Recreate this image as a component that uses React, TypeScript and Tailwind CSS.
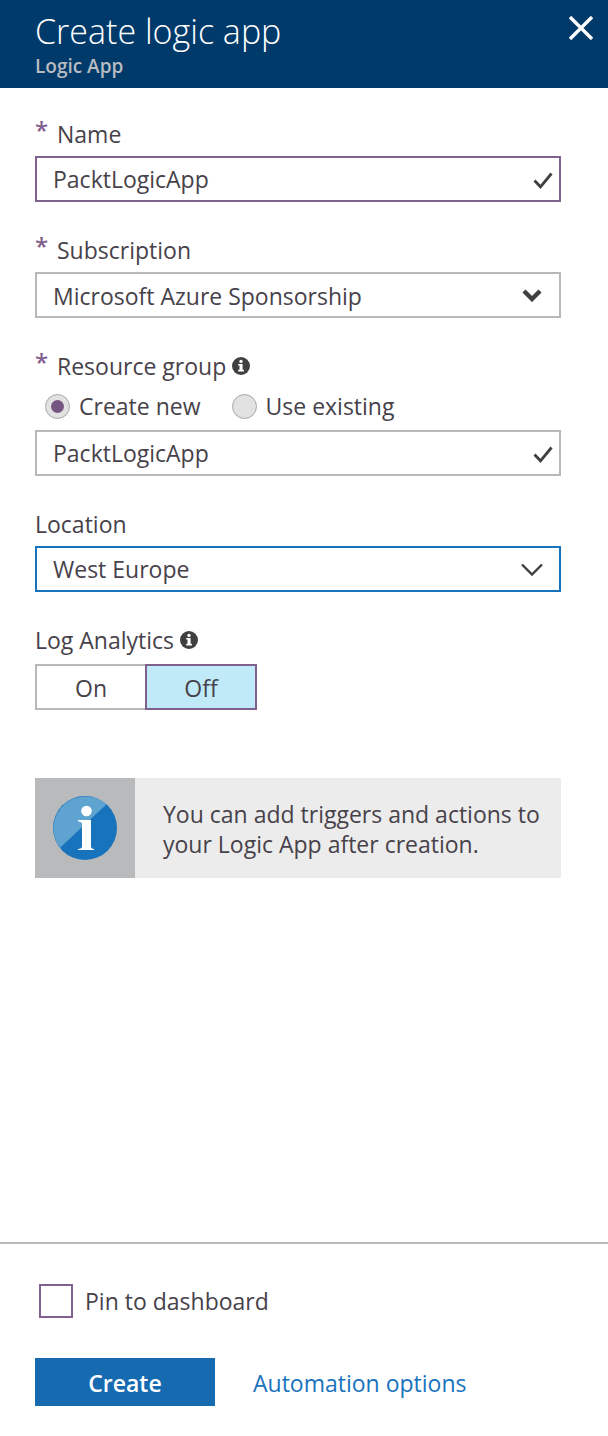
import { useState, type ReactNode } from "react";

const BOX = "h-[46px] w-full appearance-none rounded-none border-2 bg-white pl-4 pr-14 outline-none";

function Label({ htmlFor, required, children }: { htmlFor?: string; required?: boolean; children: ReactNode }) {
  return (
    <label htmlFor={htmlFor} className="flex h-8 items-center whitespace-nowrap">
      {required && <span className="w-[22px] self-start text-2xl leading-6 font-semibold text-[#80608c]">*</span>}
      {children}
    </label>
  );
}

function InfoBadge() {
  return (
    <svg viewBox="0 0 18 18" className="ml-1.5 size-[18px]" aria-hidden="true">
      <circle cx="9" cy="9" r="9" fill="#404040" />
      <circle cx="9" cy="4.4" r="1.7" fill="#fff" />
      <path d="M6.2 7H10.6V12.8H11.9V14.4H6.2V12.8H7.5V8.6H6.2Z" fill="#fff" />
    </svg>
  );
}

function Check() {
  return (
    <svg viewBox="0 0 20 18" className="pointer-events-none absolute top-4 right-2 h-[18px] w-5" fill="none" stroke="#404040" strokeWidth="2.8" aria-hidden="true">
      <path d="M1.5 8.5L7.5 14.8L18.5 1.5" />
    </svg>
  );
}

function Chevron({ bold }: { bold?: boolean }) {
  return (
    <svg viewBox="0 0 22 14" className="pointer-events-none absolute top-4 right-[18px] h-[14px] w-[22px]" fill="none" stroke="#404040" aria-hidden="true">
      {bold ? <path d="M3 3L11 11L19 3" strokeWidth="4.4" /> : <path d="M1 2.5L11 12.5L21 2.5" strokeWidth="2.4" />}
    </svg>
  );
}

function Radio({ id, label, checked, onChange }: { id: string; label: string; checked: boolean; onChange: () => void }) {
  return (
    <div className="flex items-center gap-[9px]">
      <input
        type="radio"
        id={id}
        name="resource-group-mode"
        checked={checked}
        onChange={onChange}
        className="grid size-[25px] appearance-none place-items-center rounded-full border border-[#a8a8a8] bg-[#e2e2e2] before:size-[13px] before:rounded-full checked:before:bg-[#765581]"
      />
      <label htmlFor={id}>{label}</label>
    </div>
  );
}

function LargeInfoIcon() {
  return (
    <svg viewBox="0 0 64 64" className="size-16" aria-hidden="true">
      <circle cx="32" cy="32" r="32" fill="#1873bd" />
      <path d="M7 51.8A32 32 0 0 1 53.5 8.3Z" fill="#5fa3d0" />
      <circle cx="33.5" cy="15" r="5.3" fill="#fff" />
      <path d="M25 24H38V50.5Q38 52.5 41 53V54H25V53Q29 52.5 29 50.5V28Q29 25.8 25 25.2Z" fill="#fff" />
    </svg>
  );
}

export default function App() {
  const [mode, setMode] = useState("new");
  const [analytics, setAnalytics] = useState("off");
  const [pinned, setPinned] = useState(false);
  const idle = "border-[#b8b8b8] bg-white";
  const active = "z-10 border-[#80608c] bg-[#c1eaf9]";

  return (
    <div className="flex min-h-screen flex-col bg-white font-['Open_Sans','Noto_Sans',sans-serif] text-[23px] leading-8 text-[#47424a]">
      <header className="flex h-[88px] items-start justify-between bg-[#003a6b] pt-2 pr-[15px] pl-[35px]">
        <div>
          <h1 className="text-[34px] leading-[46px] font-light text-white">Create logic app</h1>
          <p className="text-[19px] leading-6 font-semibold text-[#b8bcc0]">Logic App</p>
        </div>
        <button type="button" aria-label="Close" className="mt-2 text-white">
          <svg viewBox="0 0 24 24" className="size-6" fill="none" stroke="currentColor" strokeWidth="3.4" aria-hidden="true">
            <path d="M1 1L23 23M23 1L1 23" />
          </svg>
        </button>
      </header>

      <main className="flex flex-1 flex-col gap-8 pt-[30px] pr-[47px] pb-8 pl-[35px]">
        <div className="flex flex-col gap-1.5">
          <Label htmlFor="name" required>Name</Label>
          <div className="relative">
            <input id="name" defaultValue="PacktLogicApp" className={`${BOX} border-[#80608c]`} />
            <Check />
          </div>
        </div>

        <div className="flex flex-col gap-1.5">
          <Label htmlFor="subscription" required>Subscription</Label>
          <div className="relative">
            <select id="subscription" className={`${BOX} border-[#b8b8b8] pt-0.5`}>
              <option>Microsoft Azure Sponsorship</option>
            </select>
            <Chevron bold />
          </div>
        </div>

        <div className="flex flex-col gap-2">
          <Label htmlFor="resource-group" required>
            Resource group
            <InfoBadge />
          </Label>
          <div className="flex h-8 items-center gap-[31px] pl-2.5">
            <Radio id="create-new" label="Create new" checked={mode === "new"} onChange={() => setMode("new")} />
            <Radio id="use-existing" label="Use existing" checked={mode === "existing"} onChange={() => setMode("existing")} />
          </div>
          <div className="relative">
            <input id="resource-group" defaultValue="PacktLogicApp" className={`${BOX} border-[#b8b8b8]`} />
            <Check />
          </div>
        </div>

        <div className="flex flex-col gap-1.5">
          <Label htmlFor="location">Location</Label>
          <div className="relative">
            <select id="location" className={`${BOX} border-[#1873bd]`}>
              <option>West Europe</option>
            </select>
            <Chevron />
          </div>
        </div>

        <div className="flex flex-col gap-2">
          <div id="analytics-label" className="flex h-8 items-center">
            Log Analytics
            <InfoBadge />
          </div>
          <div role="group" aria-labelledby="analytics-label" className="flex">
            <button type="button" aria-pressed={analytics === "on"} onClick={() => setAnalytics("on")} className={`relative h-[46px] w-28 border-2 pt-0.5 ${analytics === "on" ? active : idle}`}>
              On
            </button>
            <button type="button" aria-pressed={analytics === "off"} onClick={() => setAnalytics("off")} className={`relative -ml-0.5 h-[46px] w-28 border-2 pt-0.5 ${analytics === "off" ? active : idle}`}>
              Off
            </button>
          </div>
        </div>

        <div className="mt-9 flex min-h-[100px] bg-[#ececec]">
          <div className="flex w-[100px] shrink-0 items-center justify-center bg-[#b8babc]">
            <LargeInfoIcon />
          </div>
          <p className="flex-1 self-center pt-0.5 pr-4 pl-7 leading-[30px]">
            You can add triggers and actions to your Logic App after creation.
          </p>
        </div>
      </main>

      <footer className="flex flex-col gap-10 border-t-2 border-[#b8b8b8] pt-10 pr-[47px] pb-[30px] pl-[35px]">
        <div className="flex items-center gap-3 pl-1">
          <input
            type="checkbox"
            id="pin"
            checked={pinned}
            onChange={(e) => setPinned(e.target.checked)}
            className="size-[34px] appearance-none border-2 border-[#80608c] bg-white checked:bg-[#80608c]"
          />
          <label htmlFor="pin">Pin to dashboard</label>
        </div>
        <div className="flex items-center gap-[38px]">
          <button type="submit" className="h-12 w-[180px] bg-[#166bb0] pt-0.5 font-semibold text-white">Create</button>
          <a href="#automation" className="pt-0.5 text-[#1873bd]">Automation options</a>
        </div>
      </footer>
    </div>
  );
}
